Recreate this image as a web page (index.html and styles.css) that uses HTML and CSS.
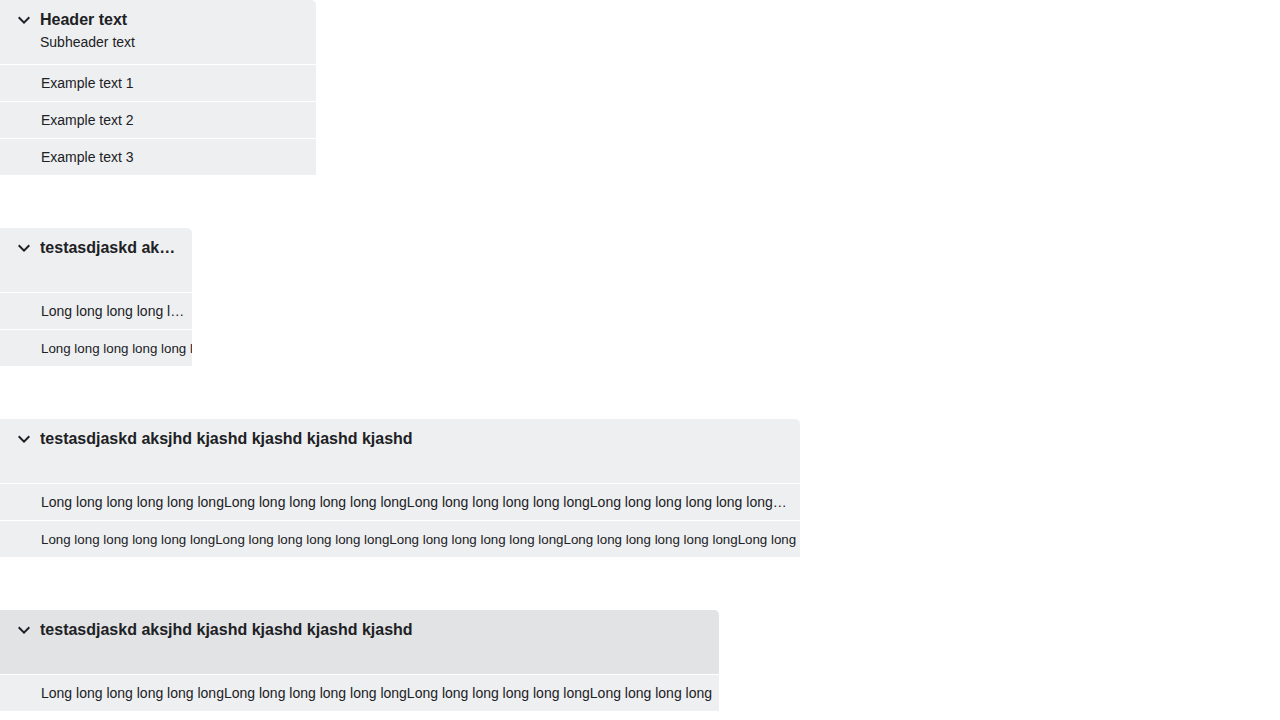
FILE: index.html
```html
<!DOCTYPE html>
<html>
<head>
<meta charset="utf-8">
<link rel="stylesheet" href="styles.css">
</head>
<body>
<div class="stack">
  <section class="panel w316">
    <div class="head">
      <svg class="chev" viewBox="0 0 24 24" width="24" height="24"><path d="M16.59 8.59L12 13.17 7.41 8.59 6 10l6 6 6-6z"/></svg>
      <div class="titles">
        <div class="title">Header text</div>
        <div class="sub">Subheader text</div>
      </div>
    </div>
    <div class="item">Example text 1</div>
    <div class="item">Example text 2</div>
    <div class="item">Example text 3</div>
  </section>

  <section class="panel w192">
    <div class="head">
      <svg class="chev" viewBox="0 0 24 24" width="24" height="24"><path d="M16.59 8.59L12 13.17 7.41 8.59 6 10l6 6 6-6z"/></svg>
      <div class="titles">
        <div class="title">testasdjaskd aksjhd kjashd kjashd kjashd kjashd</div>
      </div>
    </div>
    <div class="item">Long long long long long longLong long long long long longLong long long long long longLong long long long long longLong long long long long long</div>
    <div class="item small">Long long long long long longLong long long long long longLong long long long long longLong long long long long longLong long long long long long</div>
  </section>

  <section class="panel w800">
    <div class="head">
      <svg class="chev" viewBox="0 0 24 24" width="24" height="24"><path d="M16.59 8.59L12 13.17 7.41 8.59 6 10l6 6 6-6z"/></svg>
      <div class="titles">
        <div class="title">testasdjaskd aksjhd kjashd kjashd kjashd kjashd</div>
      </div>
    </div>
    <div class="item">Long long long long long longLong long long long long longLong long long long long longLong long long long long longLong long long long long long</div>
    <div class="item small">Long long long long long longLong long long long long longLong long long long long longLong long long long long longLong long long long long long</div>
  </section>

  <section class="panel fit">
    <div class="head hover">
      <svg class="chev" viewBox="0 0 24 24" width="24" height="24"><path d="M16.59 8.59L12 13.17 7.41 8.59 6 10l6 6 6-6z"/></svg>
      <div class="titles">
        <div class="title">testasdjaskd aksjhd kjashd kjashd kjashd kjashd</div>
      </div>
    </div>
    <div class="item">Long long long long long longLong long long long long longLong long long long long longLong long long long</div>
  </section>
</div>
</body>
</html>
```

FILE: styles.css
```css
html, body {
  margin: 0;
  padding: 0;
  background: #ffffff;
}
body {
  font-family: "Liberation Sans", Arial, sans-serif;
  color: #202124;
}
.stack {
  display: flex;
  flex-direction: column;
  align-items: flex-start;
  gap: 53px;
}
.panel {
  background: #eeeff1;
  border-top-right-radius: 5px;
  overflow: hidden;
  display: flex;
  flex-direction: column;
}
.w316 { width: 316px; }
.w192 { width: 192px; }
.w800 { width: 800px; }
.fit { width: max-content; }
.head {
  display: flex;
  align-items: flex-start;
  height: 64px;
  box-sizing: border-box;
  padding: 8px 16px 0 12px;
  gap: 4px;
}
.head.hover {
  background: #e2e3e5;
}
.chev {
  flex: none;
  fill: #202124;
}
.titles {
  min-width: 0;
  flex: 1;
}
.title {
  font-size: 16px;
  font-weight: bold;
  line-height: 24px;
  white-space: nowrap;
  overflow: hidden;
  text-overflow: ellipsis;
}
.sub {
  font-size: 14px;
  line-height: 20px;
}
.item {
  border-top: 1px solid #ffffff;
  height: 36px;
  line-height: 36px;
  font-size: 14px;
  padding: 0 7px 0 41px;
  white-space: nowrap;
  overflow: hidden;
  text-overflow: ellipsis;
}
.item.small {
  font-size: 10pt;
  line-height: 38px;
  overflow: visible;
  text-overflow: clip;
}
```
